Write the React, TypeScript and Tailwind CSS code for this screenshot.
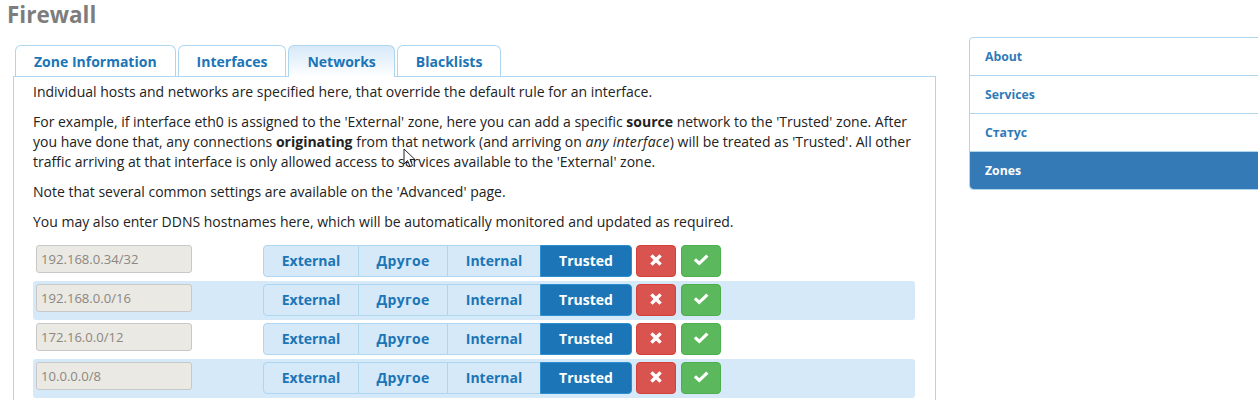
const tabs = ["Zone Information", "Interfaces", "Networks", "Blacklists"];
const networks = ["192.168.0.34/32", "192.168.0.0/16", "172.16.0.0/12", "10.0.0.0/8"];
const menu = ["About", "Services", "Статус", "Zones"];

function Tabs() {
  return (
    <div className="ml-[2px] flex h-[31px] items-start gap-[2px]">
      {tabs.map((tab) => (
        <a
          key={tab}
          className={
            "flex items-center rounded-t-[6px] border border-b-0 border-[#aed6f1] px-[18px] text-[14px] font-bold text-[#1b75b6] " +
            (tab === "Networks" ? "relative z-10 h-[32px] bg-gradient-to-b from-[#d6e9f8] to-white" : "h-[31px] bg-white pt-[1px]")
          }
        >
          {tab}
        </a>
      ))}
    </div>
  );
}

function NetworkRow({ address, striped }: { address: string; striped: boolean }) {
  return (
    <div className={"flex h-[39px] items-start rounded-[3px] pt-[3px] pl-[3px] " + (striped ? "bg-[#d6e9f8]" : "")}>
      <input
        readOnly
        value={address}
        className="h-[28px] w-[156px] rounded-[3px] border border-[#c8c8c8] bg-[#eae9e3] px-[4px] pb-[1px] text-[13.1px] text-[#8c8780]"
      />
      <div className="ml-[71px] flex h-[32px] w-[369px] text-[14px] font-bold">
        <span className="flex w-[96px] items-center justify-center rounded-l-[4px] border border-[#aed6f1] bg-[#d6e9f8] pb-[2px] text-[#1b75b6]">External</span>
        <span className="flex w-[89px] items-center justify-center border-y border-r border-[#aed6f1] bg-[#d6e9f8] pb-[2px] tracking-[0.3px] text-[#1b75b6]">Другое</span>
        <span className="flex w-[92px] items-center justify-center border-y border-[#aed6f1] bg-[#d6e9f8] pb-[2px] text-[#1b75b6]">Internal</span>
        <span className="flex w-[92px] items-center justify-center rounded-r-[4px] border border-[#2b8fd0] bg-[#1b75b6] pb-[2px] text-white">Trusted</span>
      </div>
      <button className="ml-[4px] flex h-[32px] w-[40px] items-center justify-center rounded-[4px] border border-[#d43f3a] bg-[#d9534f] pb-[2px] text-white">
        <svg width="14" height="14" viewBox="0 0 14 14" fill="currentColor">
          <path d="M3.6 1.2 7 4.6l3.4-3.4 2.4 2.4L9.4 7l3.4 3.4-2.4 2.4L7 9.4l-3.4 3.4-2.4-2.4L4.6 7 1.2 3.6z" />
        </svg>
      </button>
      <button className="ml-[5px] flex h-[32px] w-[40px] items-center justify-center rounded-[4px] border border-[#4cae4c] bg-[#5cb85c] pb-[2px] text-white">
        <svg width="16" height="14" viewBox="0 0 16 14" fill="currentColor">
          <path d="M13.3 1.5 15.5 3.7 6.3 12.5 0.8 7.4 3 5.2l3.3 3z" />
        </svg>
      </button>
    </div>
  );
}

export default function App() {
  return (
    <div
      className="relative flex h-[400px] w-[1258px] overflow-hidden bg-white text-[14px] text-[#222]"
      style={{ fontFamily: '"Open Sans", "Noto Sans", sans-serif' }}
    >
      <div className="w-[936px] shrink-0 pl-[13px]">
        <h1 className="-ml-[6px] h-[45px] pt-[1px] text-[22.5px] leading-[28px] font-bold text-[#7d7d7d]">Firewall</h1>
        <Tabs />
        <div className="h-[400px] border border-[#aed6f1] pr-[20px] pl-[19px]">
          <p className="mt-[5px] leading-[20px]">Individual hosts and networks are specified here, that override the default rule for an interface.</p>
          <p className="mt-[10px] leading-[20px]">
            For example, if interface eth0 is assigned to the 'External' zone, here you can add a specific <b>source</b> network to the 'Trusted' zone. After you have done that, any connections <b>originating</b> from that network (and arriving on <i className="tracking-[0.3px]">any interface</i>) will be treated as 'Trusted'. All other traffic arriving at that interface is only allowed access to services available to the 'External' zone.
          </p>
          <p className="mt-[10px] leading-[20px]">Note that several common settings are available on the 'Advanced' page.</p>
          <p className="mt-[10px] leading-[20px]">You may also enter DDNS hostnames here, which will be automatically monitored and updated as required.</p>
          <div className="mt-[10px]">
            {networks.map((address, i) => (
              <NetworkRow key={address} address={address} striped={i % 2 === 1} />
            ))}
          </div>
        </div>
      </div>
      <nav className="mt-[37px] ml-[33px] h-[153px] w-[300px] shrink-0 rounded-[4px] border border-[#aed6f1] text-[12.25px] font-bold text-[#2f7ab8]">
        {menu.map((item, i) => (
          <a
            key={item}
            className={
              "flex items-center pt-[2px] pl-[15px] " +
              (i > 0 ? "h-[38px] border-t border-[#aed6f1] " : "h-[37px] ") +
              (item === "Zones" ? "rounded-b-[4px] bg-[#337ab7] text-white" : "")
            }
          >
            {item}
          </a>
        ))}
      </nav>
      <svg className="absolute top-[148px] left-[403px]" width="14" height="21" viewBox="0 0 14 21">
        <path d="M1 1v15l3.5-3.5 2.5 6 2.5-1-2.5-6h5z" fill="#fff" stroke="#222" strokeWidth="1" />
      </svg>
    </div>
  );
}
